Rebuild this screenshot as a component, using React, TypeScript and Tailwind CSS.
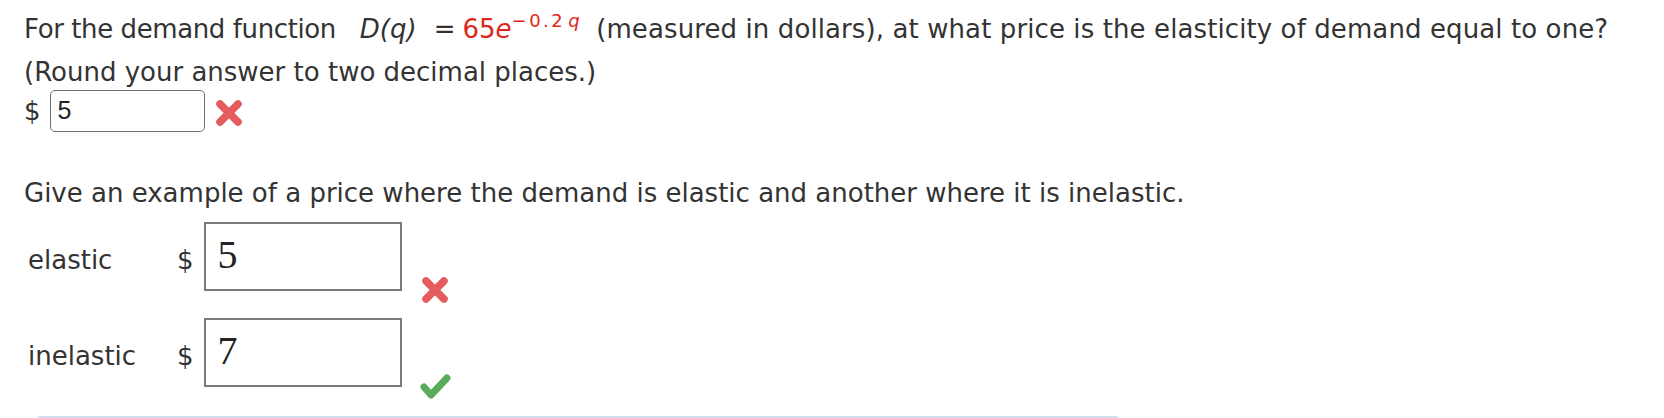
import React from "react";

const XMark = ({ id }: { id: string }) => (
  <svg width="28" height="28" viewBox="0 0 28 28" className="shrink-0">
    <defs>
      <filter id={id} x="-20%" y="-20%" width="140%" height="140%">
        <feGaussianBlur stdDeviation="0.6" />
      </filter>
    </defs>
    <g filter={`url(#${id})`} strokeLinecap="round">
      <line x1="5" y1="5" x2="23" y2="23" stroke="#e45b5b" strokeWidth="7.5" />
      <line x1="23" y1="5" x2="5" y2="23" stroke="#e45b5b" strokeWidth="7.5" />
    </g>
  </svg>
);

const Check = () => (
  <svg width="32" height="30" viewBox="0 0 32 30" className="shrink-0">
    <defs>
      <filter id="cb" x="-20%" y="-20%" width="140%" height="140%">
        <feGaussianBlur stdDeviation="0.6" />
      </filter>
    </defs>
    <path
      d="M5 16 L12 24 L28 7"
      fill="none"
      stroke="#5aab5a"
      strokeWidth="7"
      strokeLinecap="round"
      strokeLinejoin="round"
      filter="url(#cb)"
    />
  </svg>
);

export default function App() {
  return (
    <div className="w-[1664px] h-[418px] bg-white overflow-hidden font-['DejaVu_Sans','Verdana',sans-serif] text-[#333333] text-[26px]">
      <div className="pl-[24px] pt-[15px]">
        <div className="leading-[28px] whitespace-nowrap">
          <span className="tracking-[-0.4px]">For the demand function</span>
          <span className="ml-[24px] italic">D(q)</span>
          <span className="ml-[17px] mr-[7px]">=</span>
          <span className="text-[#e1261c]">
            65<span className="italic">e</span>
            <span className="relative -top-[11px] ml-[0px] text-[18px] leading-none tracking-[2.5px]">
              −0.2<span className="italic ml-[3px]">q</span>
            </span>
          </span>
          <span className="ml-[14px] tracking-[0.1px]">(measured in dollars), at what price is the elasticity of demand equal to one?</span>
        </div>
        <div className="leading-[28px] mt-[15px]">(Round your answer to two decimal places.)</div>
        <div className="flex items-center mt-[4px]">
          <span className="leading-[28px]">$</span>
          <div className="ml-[9px] w-[155px] h-[42px] rounded-[5px] border-[1.5px] border-[#707070] flex items-center pl-[7px] font-['Liberation_Sans',Arial,sans-serif] text-[25px] text-[#222]">
            5
          </div>
          <div className="ml-[10px] mt-[4px]">
            <XMark id="x1" />
          </div>
        </div>
        <div className="leading-[28px] mt-[47px]">
          Give an example of a price where the demand is elastic and another where it is inelastic.
        </div>
        <div className="ml-[4px] mt-[15px] flex items-start">
          <div className="w-[149px] pt-[24px] leading-[28px]">elastic</div>
          <div className="pt-[24px] leading-[28px]">$</div>
          <div className="ml-[10px] w-[198px] h-[69px] border-2 border-[#7a7a7a] pl-[12px] pt-[9px] font-['Liberation_Serif','Times_New_Roman',serif] text-[40px] leading-[44px] text-[#222]">
            5
          </div>
          <div className="ml-[19px] mt-[54px]">
            <XMark id="x2" />
          </div>
        </div>
        <div className="ml-[4px] mt-[14px] flex items-start">
          <div className="w-[149px] pt-[24px] leading-[28px]">inelastic</div>
          <div className="pt-[24px] leading-[28px]">$</div>
          <div className="ml-[10px] w-[198px] h-[69px] border-2 border-[#7a7a7a] pl-[12px] pt-[9px] font-['Liberation_Serif','Times_New_Roman',serif] text-[40px] leading-[44px] text-[#222]">
            7
          </div>
          <div className="ml-[17px] mt-[53px]">
            <Check />
          </div>
        </div>
        <div className="ml-[14px] mt-[15px] w-[1080px] h-[2px] bg-[#d6dcef]" />
      </div>
    </div>
  );
}
